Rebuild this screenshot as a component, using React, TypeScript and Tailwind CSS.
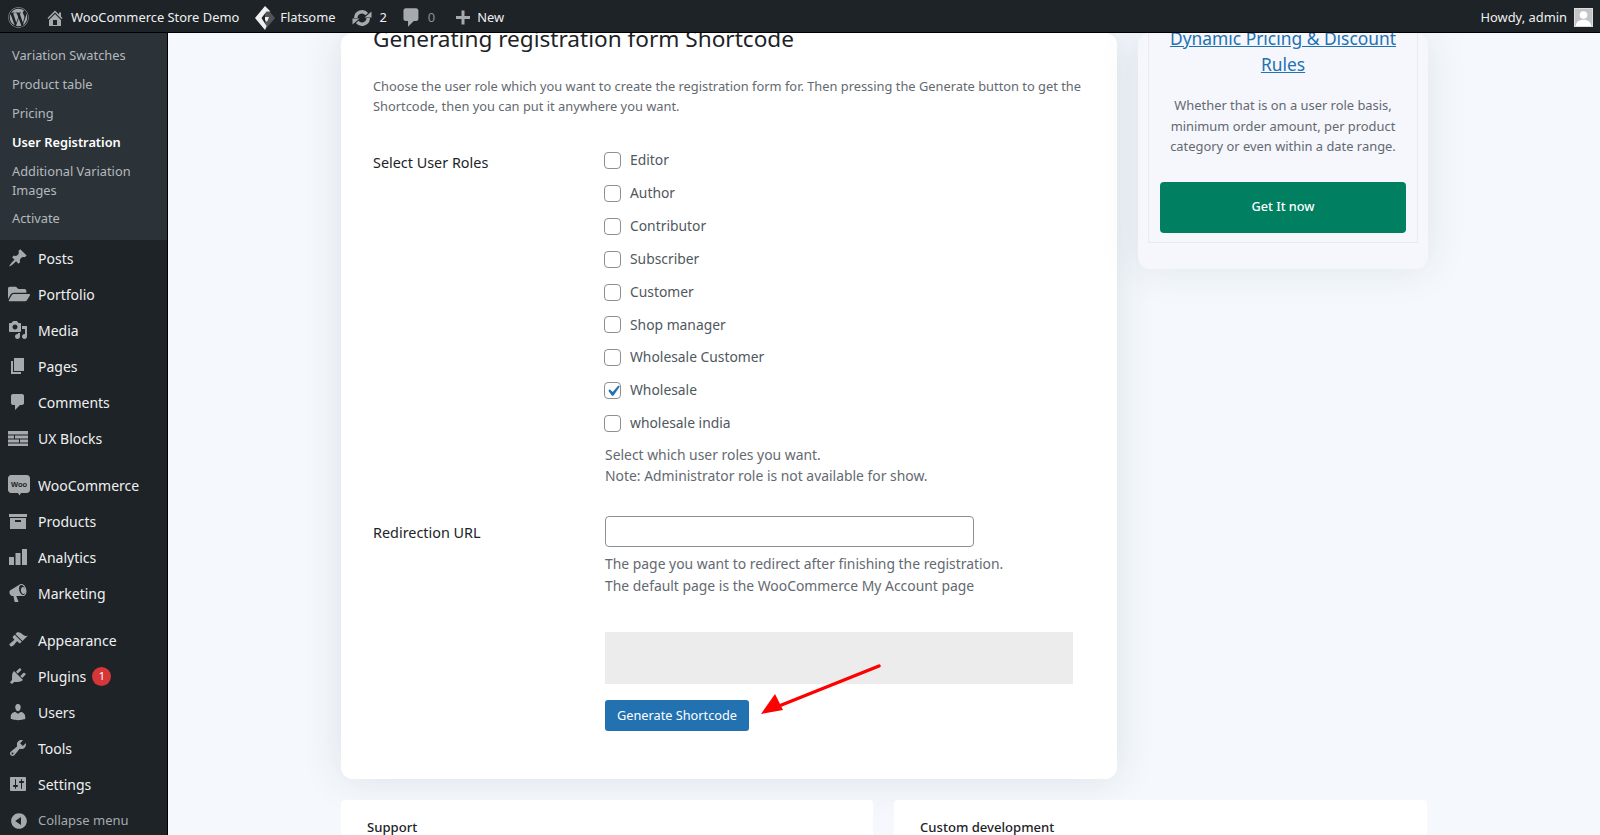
import React from "react";
import { FaWordpress, FaFolderOpen } from "react-icons/fa";

const Dash = ({ d, className = "w-5 h-5" }: { d: string; className?: string }) => (
  <svg viewBox="0 0 20 20" className={className} fill="#a7aaad">
    <path d={d} />
  </svg>
);

const paths = {
  posts: "M10.44 3.02l1.82-1.82 6.36 6.35-1.83 1.82c-1.05-.68-2.48-.57-3.41.36l-.75.75c-.92.93-1.04 2.35-.35 3.41l-1.83 1.82-2.41-2.41-2.8 2.79c-.42.42-3.38 2.71-3.8 2.29s1.86-3.39 2.28-3.81l2.79-2.79L4.1 9.36l1.83-1.82c1.05.69 2.48.57 3.4-.36l.75-.75c.93-.92 1.05-2.35.36-3.41z",
  media: "M13 11V4c0-.55-.45-1-1-1h-1.67L9 1H5L3.67 3H2c-.55 0-1 .45-1 1v7c0 .55.45 1 1 1h10c.55 0 1-.45 1-1zM7 4.5c1.38 0 2.5 1.12 2.5 2.5S8.38 9.5 7 9.5 4.5 8.38 4.5 7 5.62 4.5 7 4.5zM14 6h5v10.5c0 1.38-1.12 2.5-2.5 2.5S14 17.88 14 16.5s1.12-2.5 2.5-2.5c.17 0 .34.02.5.05V9h-3V6zm-4 8.05V13h2v3.5c0 1.38-1.12 2.5-2.5 2.5S7 17.88 7 16.5 8.12 14 9.5 14c.17 0 .34.02.5.05z",
  pages: "M6 15V2h10v13H6zm-1 1h8v2H3V5h2v11z",
  comments: "M5 2h9c1.1 0 2 .9 2 2v7c0 1.1-.9 2-2 2h-2l-5 5v-5H5c-1.1 0-2-.9-2-2V4c0-1.1.9-2 2-2z",
  products: "M1 3h18v3H1V3zm1 4h16v11H2V7zm5 2v2h6V9H7z",
  appearance: "M14.48 11.06L7.41 3.99l1.5-1.5c.5-.56 2.3-.47 3.51.32 1.21.8 1.43 1.28 2.91 2.1 1.18.64 2.45 1.26 4.45.85zm-.71.71L6.7 4.7 4.93 6.47c-.39.39-.39 1.02 0 1.41l1.06 1.06c.39.39.39 1.03 0 1.42-.6.6-1.43 1.11-2.21 1.69-.35.26-.7.53-1.01.84C1.43 13.23.91 14.75 2 15.84c1.1 1.1 2.62.58 3.96-.77.31-.31.58-.66.84-1.01.58-.78 1.09-1.61 1.69-2.21.39-.39 1.02-.39 1.41 0l1.06 1.06c.39.39 1.02.39 1.41 0z",
  plugins: "M13.11 4.36L9.87 7.6 8 5.73l3.24-3.24c.35-.34 1.05-.2 1.56.32.52.51.66 1.21.31 1.55zm-8 1.77l.91-1.12 9.01 9.01-1.19.84c-.71.71-2.63 1.16-3.82 1.16H6.14L4.9 17.26c-.59.59-1.54.59-2.12 0-.59-.58-.59-1.53 0-2.12l1.24-1.24v-3.88c0-1.13.4-3.19 1.09-3.89zm7.26 3.97l3.24-3.24c.34-.35 1.04-.21 1.55.31.52.51.66 1.21.31 1.55l-3.24 3.25z",
  users: "M10 9.25c-2.27 0-2.73-3.44-2.73-3.44C7 4.02 7.82 2 9.97 2c2.16 0 2.98 2.02 2.71 3.81 0 0-.41 3.44-2.68 3.44zm0 2.57L12.72 10c2.39 0 4.52 2.33 4.52 4.53v2.49s-3.65 1.13-7.24 1.13c-3.65 0-7.24-1.13-7.24-1.13v-2.49c0-2.25 1.94-4.48 4.47-4.48z",
  tools: "M16.68 9.77c-1.34 1.34-3.3 1.67-4.95.99l-5.41 6.52c-.99.99-2.59.99-3.58 0s-.99-2.59 0-3.57l6.52-5.42c-.68-1.65-.35-3.61.99-4.95 1.28-1.28 3.12-1.62 4.72-1.06l-2.89 2.89 2.82 2.82 2.86-2.87c.53 1.58.18 3.39-1.08 4.65zM3.81 16.21c.4.39 1.04.39 1.43 0 .4-.4.4-1.04 0-1.43-.39-.4-1.03-.4-1.43 0-.39.39-.39 1.03 0 1.43z",
  settings: "M18 16V4c0-.55-.45-1-1-1H3c-.55 0-1 .45-1 1v12c0 .55.45 1 1 1h14c.55 0 1-.45 1-1zM8 11h1c.55 0 1 .45 1 1s-.45 1-1 1H8v1.5c0 .28-.22.5-.5.5s-.5-.22-.5-.5V13H6c-.55 0-1-.45-1-1s.45-1 1-1h1V5.5c0-.28.22-.5.5-.5s.5.22.5.5V11zm5-2h-1c-.55 0-1-.45-1-1s.45-1 1-1h1V5.5c0-.28.22-.5.5-.5s.5.22.5.5V7h1c.55 0 1 .45 1 1s-.45 1-1 1h-1v5.5c0 .28-.22.5-.5.5s-.5-.22-.5-.5V9z",
  collapse: "M10 2.16c4.33 0 7.84 3.51 7.84 7.84s-3.51 7.84-7.84 7.84S2.16 14.33 2.16 10 5.71 2.16 10 2.16zm2 11.72V6.12L6.18 9.97z",
  home: "M16 8.5l1.53 1.53-1.06 1.06L10 4.62l-6.47 6.47-1.06-1.06L10 2.5l4 4v-2h2v4zm-6-2.46l6 5.99V18H4v-5.97zM12 17v-5H8v5h4z",
  plus: "M17 8v3h-5.500v5.500h-3V11H3V8h5.500V2.500h3V8h5z",
  megaphone: "M18.15 5.94c.46 1.62.38 3.22-.02 4.48-.42 1.28-1.26 2.18-2.3 2.48-.16.06-.26.06-.4.06-.06.02-.12.02-.18.02-.06.02-.14.02-.22.02h-6.8l2.22 5.5c.02.14-.06.26-.14.34-.08.1-.24.16-.34.16H6.95c-.1 0-.26-.06-.34-.16-.08-.08-.16-.2-.14-.34l-1-5.5H4.25l-.02-.02c-.5.06-1.08-.18-1.54-.62s-.88-1.08-1.06-1.88c-.24-.8-.2-1.56-.02-2.2.2-.62.58-1.08 1.06-1.3l.02-.02 9-5.4c.1-.06.18-.1.24-.16.06-.04.14-.08.24-.12.16-.08.28-.12.5-.18 1.04-.3 2.24.1 3.22.98s1.86 2.2 2.26 3.84zm-2.58 5.98h-.02c.4-.1.74-.34 1.04-.7.58-.7.86-1.76.86-3.04 0-.64-.1-1.3-.26-1.98-.34-1.36-1.02-2.5-1.78-3.24s-1.68-1.1-2.46-.88c-.82.22-1.4.96-1.7 2-.32 1.04-.28 2.36.06 3.72.38 1.36 1 2.5 1.8 3.24.78.74 1.62 1.1 2.46.88zm-2.62-4.04c-.2-.9-.12-1.8.2-2.5.32-.72.86-1.24 1.58-1.3.7-.06 1.38.36 1.92 1.06.52.7.9 1.64.98 2.64.08 1.02-.2 1.96-.78 2.58s-1.4.76-2.14.34c-.76-.44-1.36-1.42-1.76-2.82z",
};

const subItems = ["Variation Swatches", "Product table", "Pricing", "User Registration", "Additional Variation Images", "Activate"];
const roles = ["Editor", "Author", "Contributor", "Subscriber", "Customer", "Shop manager", "Wholesale Customer", "Wholesale", "wholesale india"];

const Bars = () => (
  <svg viewBox="0 0 20 20" className="w-5 h-5" fill="#a7aaad">
    <rect x="1" y="10" width="5" height="8" />
    <rect x="7.5" y="6" width="5" height="12" />
    <rect x="14" y="2" width="5" height="16" />
  </svg>
);

const Bricks = () => (
  <svg viewBox="0 0 20 20" className="w-5 h-5" fill="#a7aaad">
    <path d="M0 3h20v3.5H0zM0 7.5h6v3H0zM7 7.5h13v3H7zM0 11.5h11v3H0zM12 11.5h8v3h-8zM0 15.5h20V18H0z" />
  </svg>
);

const Woo = () => (
  <svg viewBox="0 0 22 22" className="w-[22px] h-[22px]">
    <path d="M3 1h16c1.500 0 3 1.500 3 3v12c0 1.500-1.500 3-3 3h-6l-1.500 2.500L10 19H3c-1.500 0-3-1.500-3-3V4c0-1.500 1.500-3 3-3z" fill="#a7aaad" />
    <text x="11" y="13" textAnchor="middle" fontSize="7.500" fontWeight="700" fill="#1d2327" fontFamily="'Liberation Sans', sans-serif">Woo</text>
  </svg>
);

const Flatsome = () => (
  <svg viewBox="0 0 20 24" className="w-[20px] h-[24px]">
    <path d="M10 0l10 12-10 12z" fill="#50555a" />
    <path d="M10 0L0 12l10 12 1.500-4-5-8 5-6.500h4z" fill="#f0f0f1" />
    <path d="M10 11h4l-2 5-2-2z" fill="#f0f0f1" />
  </svg>
);

const Update = () => (
  <svg viewBox="0 0 20 20" className="w-5 h-5" fill="none" stroke="#a7aaad" strokeWidth="3.500">
    <path d="M3.800 10a6.200 6.200 0 0 1 11-3.900" />
    <path d="M16.200 10a6.200 6.200 0 0 1-11 3.900" />
    <path d="M12.500 9.500h7V3.500z" fill="#a7aaad" stroke="none" />
    <path d="M7.500 10.500H.5V16.500z" fill="#a7aaad" stroke="none" />
  </svg>
);

const menuGroups: { label: string; icon: React.ReactNode; badge?: string }[][] = [
  [
    { label: "Posts", icon: <Dash d={paths.posts} /> },
    { label: "Portfolio", icon: <FaFolderOpen className="w-[22px] h-[22px] text-[#a7aaad]" /> },
    { label: "Media", icon: <Dash d={paths.media} /> },
    { label: "Pages", icon: <Dash d={paths.pages} /> },
    { label: "Comments", icon: <Dash d={paths.comments} /> },
    { label: "UX Blocks", icon: <Bricks /> },
  ],
  [
    { label: "WooCommerce", icon: <Woo /> },
    { label: "Products", icon: <Dash d={paths.products} /> },
    { label: "Analytics", icon: <Bars /> },
    { label: "Marketing", icon: <Dash d={paths.megaphone} /> },
  ],
  [
    { label: "Appearance", icon: <Dash d={paths.appearance} /> },
    { label: "Plugins", icon: <Dash d={paths.plugins} />, badge: "1" },
    { label: "Users", icon: <Dash d={paths.users} /> },
    { label: "Tools", icon: <Dash d={paths.tools} /> },
    { label: "Settings", icon: <Dash d={paths.settings} /> },
  ],
];

export default function App() {
  return (
    <div className="h-[835px] w-[1600px] overflow-hidden flex flex-col bg-[#f5f9fd] font-['Noto_Sans',sans-serif] text-[#50575e]">
      {/* admin bar */}
      <header className="h-[33px] shrink-0 bg-[#1d2327] border-b border-black pt-[3px] flex items-center text-[12.9px] text-[#f0f0f1] z-10">
        <FaWordpress className="ml-[8px] w-[21px] h-[21px] text-[#a7aaad]" />
        <Dash d={paths.home} className="ml-[16px] w-5 h-5" />
        <span className="ml-[6px]">WooCommerce Store Demo</span>
        <span className="ml-[16px]"><Flatsome /></span>
        <span className="ml-[5px]">Flatsome</span>
        <span className="ml-[17px]"><Update /></span>
        <span className="ml-[7px]">2</span>
        <Dash d={paths.comments} className="ml-[13px] w-[23px] h-[23px]" />
        <span className="ml-[5px] text-[#8c8f94]">0</span>
        <Dash d={paths.plus} className="ml-[18px] w-5 h-5" />
        <span className="ml-[4px]">New</span>
        <span className="ml-auto">Howdy, admin</span>
        <div className="ml-[7px] mr-[7px] w-[19px] h-[19px] bg-[#c3c4c7] border border-[#ddd] flex items-end justify-center overflow-hidden">
          <svg viewBox="0 0 20 20" className="w-[17px] h-[17px]" fill="#fff">
            <circle cx="10" cy="7" r="4.500" />
            <path d="M1 20c0-5 4-7.500 9-7.500s9 2.500 9 7.500z" />
          </svg>
        </div>
      </header>

      <div className="flex flex-1 min-h-0">
        {/* sidebar */}
        <aside className="w-[168px] shrink-0 bg-[#1d2327] border-r border-black">
          <ul className="bg-[#2c3338] h-[207px] pt-[8px] pl-[12px] text-[12.8px] text-[#b4b9be]">
            {subItems.map((item) => (
              <li
                key={item}
                className={`${item === "User Registration" ? "font-semibold text-white" : ""} ${item.startsWith("Additional") ? "pt-[5px] pb-[4px] leading-[19px]" : "py-[4px] leading-[21px]"}`}
              >
                {item}
              </li>
            ))}
          </ul>
          {menuGroups.map((group, i) => (
            <ul key={i} className="mb-[11px]">
              {group.map((m) => (
                <li key={m.label} className="h-[36px] flex items-center pl-[8px] text-[14px] text-[#f0f0f1]">
                  <span className="w-[30px] flex">{m.icon}</span>
                  {m.label}
                  {m.badge && (
                    <span className="ml-[6px] w-[19px] h-[19px] rounded-full bg-[#d63638] text-white text-[11px] flex items-center justify-center">
                      {m.badge}
                    </span>
                  )}
                </li>
              ))}
            </ul>
          ))}
          <div className="-mt-[10px] h-[36px] flex items-center pl-[9px] text-[13px] text-[#a7aaad]">
            <span className="w-[29px] flex"><Dash d={paths.collapse} /></span>
            Collapse menu
          </div>
        </aside>

        {/* page */}
        <main className="flex-1 min-w-0 pl-[173px]">
          <div className="flex gap-[21px] items-start">
            <section className="w-[776px] h-[746px] shrink-0 bg-white rounded-xl shadow-[0_0_40px_rgba(30,50,80,0.12)] pl-[32px] pr-[30px]">
              <h2 className="-mt-[11px] text-[22.6px] leading-[34px] text-[#1d2327]">Generating registration form Shortcode</h2>
              <p className="mt-[20px] text-[12.85px] leading-[20px] text-[#646970]">
                Choose the user role which you want to create the registration form for. Then pressing the Generate button to get the Shortcode, then you can put it anywhere you want.
              </p>
              <div className="mt-[28px] flex">
                <div className="w-[232px] shrink-0 text-[14.4px] text-[#1d2327] pt-[8px]">Select User Roles</div>
                <div className="flex-1">
                  <ul className="-ml-px">
                    {roles.map((role) => (
                      <li key={role} className="h-[32.9px] flex items-center gap-[9px] text-[13.85px]">
                        <span className="w-[17px] h-[17px] rounded-[4px] border border-[#8c8f94] bg-white flex items-center justify-center">
                          {role === "Wholesale" && (
                            <svg viewBox="0 0 20 20" className="w-[22px] h-[22px] shrink-0" fill="#2271b1">
                              <path d="M14.83 4.89l1.34.94-5.810 8.380H9.020L5.780 9.670l1.340-1.250 2.570 2.400z" />
                            </svg>
                          )}
                        </span>
                        {role}
                      </li>
                    ))}
                  </ul>
                  <p className="mt-[4px] text-[13.9px] leading-[21px] text-[#646970]">
                    Select which user roles you want.
                    <br />
                    Note: Administrator role is not available for show.
                  </p>
                </div>
              </div>
              <div className="mt-[30px] flex">
                <div className="w-[232px] shrink-0 text-[14.4px] text-[#1d2327] pt-[6px]">Redirection URL</div>
                <div className="flex-1">
                  <div className="w-[369px] h-[31px] rounded-[4px] border border-[#8c8f94] bg-white" />
                  <p className="mt-[6px] text-[13.9px] leading-[21.5px] text-[#646970]">
                    The page you want to redirect after finishing the registration.
                    <br />
                    The default page is the WooCommerce My Account page
                  </p>
                  <div className="mt-[36px] h-[52px] w-[468px] bg-[#ececec]" />
                  <button className="mt-[16px] h-[31px] w-[144px] rounded-[3px] bg-[#2271b1] text-white text-[12.75px]">Generate Shortcode</button>
                </div>
              </div>
            </section>

            <aside className="w-[290px] h-[236px] shrink-0 bg-[#f5f7fd] rounded-xl shadow-[0_0_40px_rgba(30,50,80,0.1)] px-[10px]">
              <div className="h-[218px] border border-[#e8eaee] border-t-0 px-[11px] text-center">
                <h3 className="-mt-[8px] text-[17.4px] leading-[26px] text-[#2271b1] underline">Dynamic Pricing &amp; Discount Rules</h3>
                <p className="mt-[18px] text-[12.9px] leading-[20.5px] text-[#646970]">
                  Whether that is on a user role basis, minimum order amount, per product category or even within a date range.
                </p>
                <button className="mt-[25px] w-[246px] h-[51px] rounded-[4px] bg-[#008060] text-white text-[12.7px] font-medium">Get It now</button>
              </div>
            </aside>
          </div>
          <div className="mt-[21px] flex gap-[21px]">
            <div className="w-[532px] h-[60px] bg-white rounded-sm pl-[26px] pt-[18px] text-[13.1px] font-medium text-[#1d2327]">Support</div>
            <div className="w-[533px] h-[60px] bg-white rounded-sm pl-[26px] pt-[18px] text-[13.1px] font-medium text-[#1d2327]">Custom development</div>
          </div>
        </main>
      </div>

      {/* annotation arrow drawn over the screenshot */}
      <svg className="absolute left-[750px] top-[655px] w-[140px] h-[70px]" viewBox="0 0 140 70">
        <path d="M129 11L24 53" stroke="#f00" strokeWidth="3.500" strokeLinecap="round" />
        <path d="M11 59l14-20 8 16z" fill="#f00" />
      </svg>
    </div>
  );
}
